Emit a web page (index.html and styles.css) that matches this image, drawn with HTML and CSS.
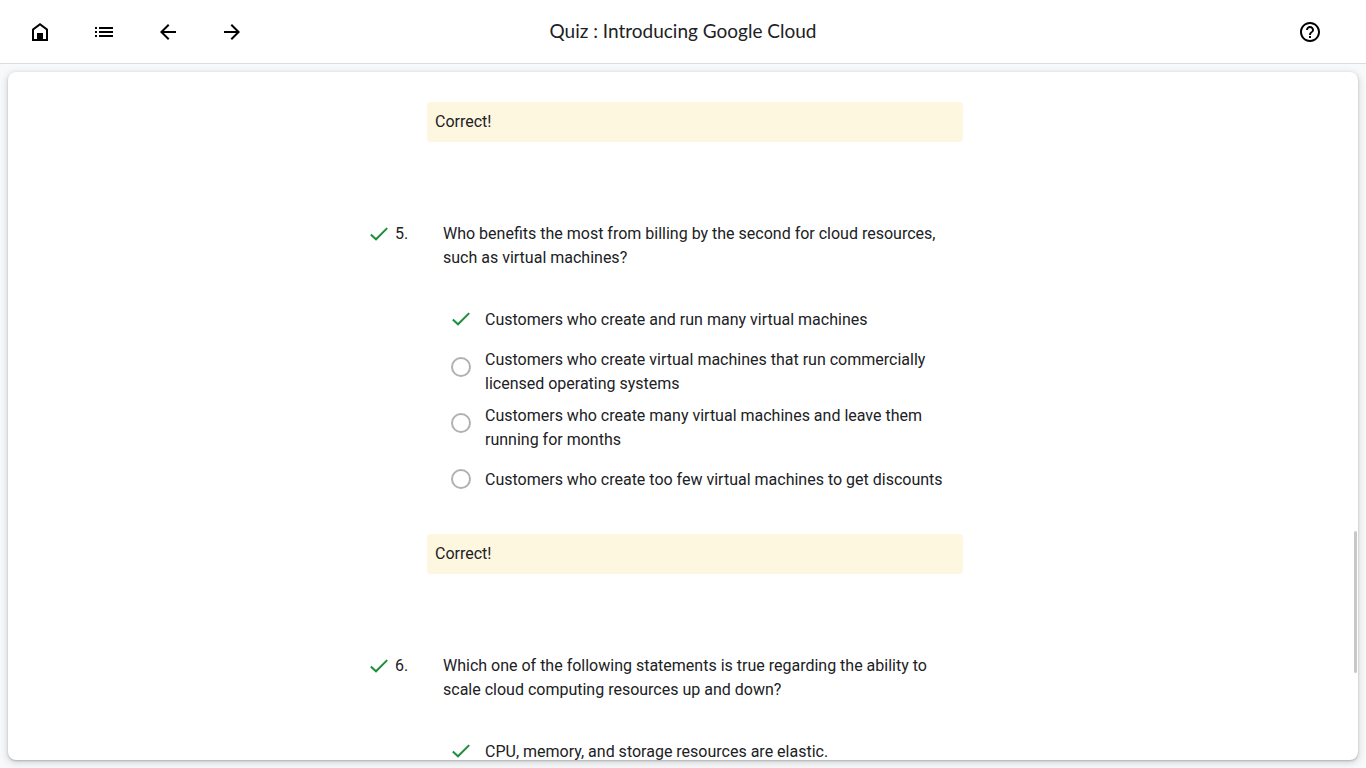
FILE: index.html
```html
<!DOCTYPE html>
<html lang="en">
<head>
<meta charset="utf-8">
<meta name="viewport" content="width=device-width, initial-scale=1">
<title>Quiz : Introducing Google Cloud</title>
<link rel="stylesheet" href="styles.css">
</head>
<body>
<svg class="sprite" aria-hidden="true">
  <symbol id="check" viewBox="0 0 20 20"><path d="M1.8 10.6 7 15.3 18.2 4.1" fill="none" stroke="currentColor" stroke-width="2"/></symbol>
</svg>
<header class="topbar">
  <nav class="topbar-nav" aria-label="Course">
    <a class="icon-button" href="#" aria-label="Home"><svg viewBox="0 0 24 24"><path fill-rule="evenodd" d="M12 3l8 6v12H4V9zM12 5.5 6 10v9h3v-6h6v6h3v-9z"/></svg></a>
    <button class="icon-button" type="button" aria-label="Contents"><svg viewBox="0 0 24 24"><path d="M3 7h2v2H3zm0 4h2v2H3zm0 4h2v2H3zM7 7h14v2H7zm0 4h14v2H7zm0 4h14v2H7z"/></svg></button>
    <a class="icon-button" href="#" aria-label="Previous"><svg viewBox="0 0 24 24"><path d="M20 11H7.83l5.59-5.59L12 4l-8 8 8 8 1.41-1.41L7.83 13H20z"/></svg></a>
    <a class="icon-button" href="#" aria-label="Next"><svg viewBox="0 0 24 24"><path d="M4 11h12.17l-5.59-5.59L12 4l8 8-8 8-1.41-1.41L16.17 13H4z"/></svg></a>
  </nav>
  <h1 class="topbar-title">Quiz : Introducing Google Cloud</h1>
  <div class="topbar-end">
    <button class="icon-button" type="button" aria-label="Help"><svg viewBox="0 0 24 24"><path d="M11 18h2v-2h-2zm1-16C6.48 2 2 6.48 2 12s4.48 10 10 10 10-4.48 10-10S17.52 2 12 2m0 18c-4.41 0-8-3.59-8-8s3.59-8 8-8 8 3.59 8 8-3.59 8-8 8m0-14c-2.21 0-4 1.79-4 4h2c0-1.1.9-2 2-2s2 .9 2 2c0 2-3 1.75-3 5h2c0-2.25 3-2.5 3-5 0-2.21-1.79-4-4-4"/></svg></button>
  </div>
</header>
<main class="stage">
  <div class="card">
    <div class="quiz">
      <p class="feedback">Correct!</p>
      <section class="question" aria-labelledby="q5">
        <div class="marker"><svg class="tick"><use href="#check"/></svg><span>5.</span></div>
        <p class="prompt" id="q5">Who benefits the most from billing by the second for cloud resources, such as virtual machines?</p>
        <div class="options" role="radiogroup" aria-labelledby="q5">
          <label class="option"><span class="control"><input class="radio" type="radio" name="q5" checked><svg class="tick"><use href="#check"/></svg></span><span>Customers who create and run many virtual machines</span></label>
          <label class="option"><span class="control"><input class="radio" type="radio" name="q5"></span><span>Customers who create virtual machines that run commercially licensed operating systems</span></label>
          <label class="option"><span class="control"><input class="radio" type="radio" name="q5"></span><span>Customers who create many virtual machines and leave them running for months</span></label>
          <label class="option"><span class="control"><input class="radio" type="radio" name="q5"></span><span>Customers who create too few virtual machines to get discounts</span></label>
        </div>
      </section>
      <p class="feedback">Correct!</p>
      <section class="question" aria-labelledby="q6">
        <div class="marker"><svg class="tick"><use href="#check"/></svg><span>6.</span></div>
        <p class="prompt" id="q6">Which one of the following statements is true regarding the ability to scale cloud computing resources up and down?</p>
        <div class="options" role="radiogroup" aria-labelledby="q6">
          <label class="option"><span class="control"><input class="radio" type="radio" name="q6" checked><svg class="tick"><use href="#check"/></svg></span><span>CPU, memory, and storage resources are elastic.</span></label>
        </div>
      </section>
    </div>
    <div class="scroll-thumb"></div>
  </div>
</main>
</body>
</html>
```
FILE: styles.css
```css
* { box-sizing: border-box; }
body {
  margin: 0;
  height: 100vh;
  display: flex;
  flex-direction: column;
  overflow: hidden;
  background: #f8f9fa;
  color: #202124;
  font: 16px/24px Roboto, sans-serif;
}
p, h1 { margin: 0; }
.sprite { position: absolute; width: 0; height: 0; }

.topbar {
  flex: none;
  display: grid;
  grid-template-columns: 1fr auto 1fr;
  align-items: center;
  height: 64px;
  padding: 0 32px 0 16px;
  background: #fff;
  border-bottom: 1px solid #dadce0;
}
.topbar-nav { display: flex; gap: 16px; }
.topbar-end { display: flex; justify-content: flex-end; }
.topbar-title {
  font: 400 19px/24px Lato, sans-serif;
  padding: 0 0 2px 16px;
}
.icon-button {
  display: grid;
  place-items: center;
  width: 48px;
  height: 48px;
  padding: 0;
  border: 0;
  background: none;
  color: #000;
  cursor: pointer;
}
.icon-button svg { width: 24px; height: 24px; fill: currentColor; }

.stage { flex: 1; min-height: 0; display: flex; padding: 8px; }
.card {
  position: relative;
  flex: 1;
  overflow: hidden;
  padding: 30px 16px 0;
  background: #fff;
  border-radius: 8px;
  box-shadow: 0 1px 2px rgba(60, 64, 67, .3), 0 2px 6px 2px rgba(60, 64, 67, .15);
}
.quiz { width: 100%; max-width: 630px; margin: 0 auto; }
.feedback {
  margin: 0 35px 0 59px;
  padding: 8px;
  background: #fef7e0;
  border-radius: 4px;
}
.question {
  display: grid;
  grid-template-columns: 75px 1fr;
  padding: 80px 35px 34px 0;
}
.marker { display: flex; align-items: center; gap: 6px; height: 24px; padding-left: 1px; }
.tick { flex: none; width: 20px; height: 20px; color: #1e8e3e; }
.options {
  grid-column: 2;
  display: flex;
  flex-direction: column;
  gap: 8px;
  padding-top: 30px;
}
.option { display: flex; align-items: center; gap: 6px; min-height: 40px; }
.control {
  flex: none;
  align-self: flex-start;
  display: grid;
  place-items: center;
  width: 36px;
  height: 38px;
}
.control > * { grid-area: 1 / 1; }
.radio {
  appearance: none;
  width: 20px;
  height: 20px;
  margin: 0;
  border: 2px solid #b1b1b1;
  border-radius: 50%;
}
.radio:checked { border-color: transparent; }
.scroll-thumb {
  position: absolute;
  top: 459px;
  right: 1px;
  width: 3px;
  height: 142px;
  border-radius: 2px;
  background: #c8c8c8;
}
```
